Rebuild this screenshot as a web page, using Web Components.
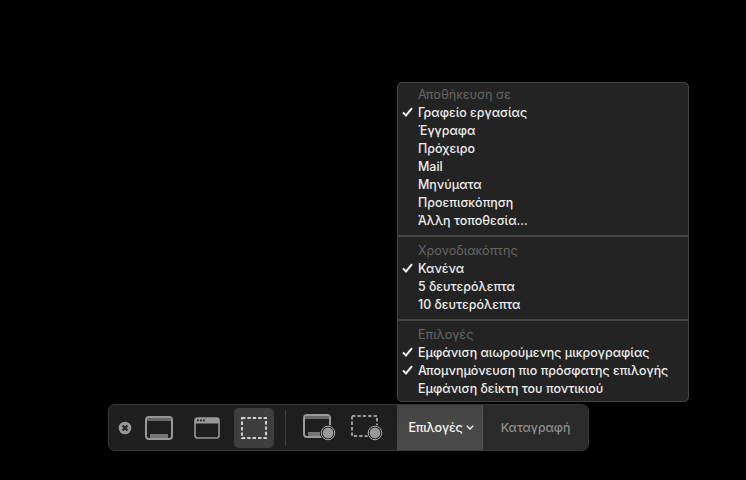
<!DOCTYPE html>
<html lang="el">
<head>
<meta charset="utf-8">
<title>Στιγμιότυπο οθόνης</title>
<style>
    html, body { margin: 0; background: #000; }
    body {
        box-sizing: border-box;
        height: 480px;
        padding: 82px 0 0 108px;
        overflow: hidden;
        font-family: Inter, "Noto Sans", sans-serif;
    }
</style>
</head>
<body>
<shot-menu>
    <menu-group label="Αποθήκευση σε">
        <menu-row checked>Γραφείο εργασίας</menu-row>
        <menu-row>Έγγραφα</menu-row>
        <menu-row>Πρόχειρο</menu-row>
        <menu-row>Mail</menu-row>
        <menu-row>Μηνύματα</menu-row>
        <menu-row>Προεπισκόπηση</menu-row>
        <menu-row>Άλλη τοποθεσία...</menu-row>
    </menu-group>
    <menu-group label="Χρονοδιακόπτης">
        <menu-row checked>Κανένα</menu-row>
        <menu-row>5 δευτερόλεπτα</menu-row>
        <menu-row>10 δευτερόλεπτα</menu-row>
    </menu-group>
    <menu-group label="Επιλογές">
        <menu-row checked>Εμφάνιση αιωρούμενης μικρογραφίας</menu-row>
        <menu-row checked>Απομνημόνευση πιο πρόσφατης επιλογής</menu-row>
        <menu-row>Εμφάνιση δείκτη του ποντικιού</menu-row>
    </menu-group>
</shot-menu>
<shot-toolbar></shot-toolbar>

<script>
class MenuRow extends HTMLElement {
    constructor() {
        super();
        this.attachShadow({ mode: 'open' });
    }

    connectedCallback() {
        var check = this.hasAttribute('checked')
            ? '<svg width="11" height="10" viewBox="0 0 11 10"><path d="M1 5.4 L4 8.5 L10 1.2" fill="none" stroke="#f2f2f2" stroke-width="2"/></svg>'
            : '';
        this.shadowRoot.innerHTML = `
            <style>
                :host {
                    display: flex;
                    align-items: center;
                    height: 18px;
                    color: #eeeeee;
                    font-size: 12.45px;
                    font-weight: 500;
                    white-space: nowrap;
                }
                #tick {
                    display: flex;
                    justify-content: center;
                    width: 20px;
                    padding-right: 2px;
                    box-sizing: border-box;
                }
            </style>
            <span id="tick">${check}</span><slot></slot>
        `;
    }
}

class MenuGroup extends HTMLElement {
    constructor() {
        super();
        this.attachShadow({ mode: 'open' });
    }

    connectedCallback() {
        this.shadowRoot.innerHTML = `
            <style>
                :host {
                    display: block;
                    padding: 0 0 6px;
                    margin-bottom: 5px;
                    border-bottom: 2px solid #444;
                }
                :host(:last-child) {
                    border-bottom: 0;
                    padding-bottom: 0;
                    margin-bottom: 0;
                }
                #label {
                    height: 17px;
                    line-height: 18px;
                    padding-left: 20px;
                    color: #666;
                    font-size: 12.6px;
                }
            </style>
            <div id="label">${this.getAttribute('label')}</div>
            <slot></slot>
        `;
    }
}

class ShotMenu extends HTMLElement {
    constructor() {
        super();
        this.attachShadow({ mode: 'open' });
    }

    connectedCallback() {
        this.shadowRoot.innerHTML = `
            <style>
                :host {
                    display: block;
                    box-sizing: border-box;
                    width: 292px;
                    height: 320px;
                    margin: 0 0 2px 289px;
                    padding: 3px 0 0;
                    background: #232323;
                    border: 1px solid #464646;
                    border-radius: 5px;
                }
            </style>
            <slot></slot>
        `;
    }
}

class ShotToolbar extends HTMLElement {
    constructor() {
        super();
        this.attachShadow({ mode: 'open' });
    }

    connectedCallback() {
        var g = '#989898';
        var bg = '#1e1e1e';
        this.shadowRoot.innerHTML = `
            <style>
                :host {
                    display: flex;
                    box-sizing: border-box;
                    width: 481px;
                    height: 47px;
                    background: ${bg};
                    border: 1px solid #383838;
                    border-radius: 7px;
                    overflow: hidden;
                }
                #tools {
                    display: flex;
                    align-items: center;
                    width: 288px;
                    flex: none;
                }
                svg { display: block; flex: none; }
                #close { margin-left: 9px; }
                #screen { margin-left: 13px; }
                #window { margin-left: 21px; }
                #selected {
                    display: flex;
                    align-items: center;
                    justify-content: center;
                    width: 40px;
                    height: 40px;
                    margin-left: 14px;
                    background: #3e3e3e;
                    border-radius: 5px;
                }
                #divider {
                    width: 1px;
                    height: 36px;
                    margin-left: 11px;
                    background: #3c3c3c;
                }
                #rec-screen { margin-left: 17px; }
                #rec-area { margin-left: 15px; }
                #options {
                    display: flex;
                    align-items: center;
                    justify-content: center;
                    gap: 3px;
                    width: 86px;
                    padding-left: 3px;
                    flex: none;
                    background: linear-gradient(#444, #4b4b4b);
                    border-right: 1px solid #555;
                    box-sizing: border-box;
                    color: #f6f6f6;
                    font-size: 12.5px;
                    font-weight: 500;
                    letter-spacing: -0.2px;
                }
                #capture {
                    flex: 1;
                    display: flex;
                    align-items: center;
                    justify-content: center;
                    background: #2a2a2a;
                    color: #8e8e8e;
                    font-size: 12.3px;
                    font-weight: 500;
                }
            </style>
            <div id="tools">
                <svg id="close" width="14" height="14" viewBox="0 0 14 14">
                    <circle cx="7" cy="7" r="6.3" fill="${g}"/>
                    <path d="M4.5 4.5 L9.5 9.5 M9.5 4.5 L4.5 9.5" stroke="#222" stroke-width="2"/>
                </svg>
                <svg id="screen" width="28" height="24" viewBox="0 0 28 24">
                    <rect x="1" y="1" width="26" height="22" rx="3" fill="${bg}" stroke="${g}" stroke-width="2"/>
                    <rect x="2" y="2" width="24" height="3" fill="#686868"/>
                    <rect x="5" y="18" width="18" height="4" fill="#767676"/>
                </svg>
                <svg id="window" width="26" height="22" viewBox="0 0 26 22">
                    <rect x="1" y="1" width="24" height="20" rx="2.5" fill="${bg}" stroke="${g}" stroke-width="1.6"/>
                    <path d="M1 3.5 a2.5 2.5 0 0 1 2.5 -2.5 h19 a2.5 2.5 0 0 1 2.5 2.5 v3 h-24z" fill="${g}"/>
                    <path d="M3 3.4 h1.8 M6 3.4 h1.8 M9 3.4 h1.8" stroke="${bg}" stroke-width="1.6"/>
                </svg>
                <div id="selected">
                    <svg width="26" height="22" viewBox="0 0 26 22">
                        <rect x="1" y="1" width="24" height="20" fill="none" stroke="#d0d0d0" stroke-width="2" stroke-dasharray="3.4 2"/>
                    </svg>
                </div>
                <div id="divider"></div>
                <svg id="rec-screen" width="33" height="27" viewBox="0 0 33 27">
                    <rect x="1" y="1" width="26" height="22" rx="3" fill="${bg}" stroke="${g}" stroke-width="2"/>
                    <rect x="2" y="2" width="24" height="3" fill="#686868"/>
                    <rect x="5" y="18" width="12" height="4" fill="#767676"/>
                    <circle cx="25" cy="19" r="8" fill="${bg}"/>
                    <circle cx="25" cy="19" r="6.8" fill="none" stroke="#a8a8a8" stroke-width="1"/>
                    <circle cx="25" cy="19" r="5.4" fill="${g}"/>
                </svg>
                <svg id="rec-area" width="33" height="27" viewBox="0 0 33 27">
                    <rect x="1" y="2" width="25" height="20" fill="none" stroke="${g}" stroke-width="2" stroke-dasharray="3.4 2"/>
                    <circle cx="24" cy="19" r="8" fill="${bg}"/>
                    <circle cx="24" cy="19" r="6.8" fill="none" stroke="#a8a8a8" stroke-width="1"/>
                    <circle cx="24" cy="19" r="5.4" fill="${g}"/>
                </svg>
            </div>
            <div id="options">
                <span>Επιλογές</span>
                <svg width="8" height="5" viewBox="0 0 8 5"><path d="M.8 .8 L4 4 L7.2 .8" fill="none" stroke="#f0f0f0" stroke-width="1.4"/></svg>
            </div>
            <div id="capture">Καταγραφή</div>
        `;
    }
}

window.customElements.define('menu-row', MenuRow);
window.customElements.define('menu-group', MenuGroup);
window.customElements.define('shot-menu', ShotMenu);
window.customElements.define('shot-toolbar', ShotToolbar);
</script>
</body>
</html>
